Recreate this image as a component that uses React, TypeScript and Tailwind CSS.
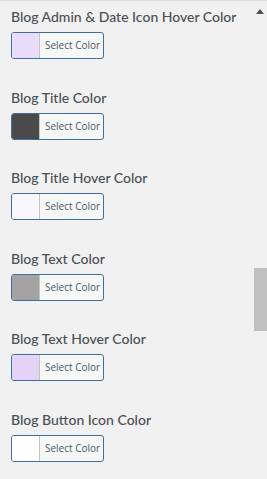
import React from 'react';

const rows = [
  { label: 'Blog Admin & Date Icon Hover Color', swatch: 'bg-[#e8dcf8]' },
  { label: 'Blog Title Color', swatch: 'bg-[#4a4a4a]' },
  { label: 'Blog Title Hover Color', swatch: 'bg-[#f9f6fd]' },
  { label: 'Blog Text Color', swatch: 'bg-[#a3a3a3]' },
  { label: 'Blog Text Hover Color', swatch: 'bg-[#e2d3f7]' },
  { label: 'Blog Button Icon Color', swatch: 'bg-white' },
];

const ColorControl: React.FC<{ label: string; swatch: string }> = ({ label, swatch }) => (
  <div className="flex flex-col">
    <span className="font-['Lato',sans-serif] text-[14px] leading-[20px] font-medium text-[#4a4f55] whitespace-nowrap">{label}</span>
    <button className="mt-[5px] flex h-[27px] w-[93px] overflow-hidden rounded-[3px] border border-[#3f6f9a] bg-[#f6f7f7]">
      <span className={`h-full w-[28px] border-r border-[#c3c4c7] ${swatch}`}></span>
      <span className="flex-1 pl-[5px] text-left text-[10px] leading-[25px] text-[#50575e]">Select Color</span>
    </button>
  </div>
);

export default function App() {
  return (
    <div className="flex h-[479px] w-[267px] overflow-hidden border-t border-[#dcdcde] bg-[#f1f1f1] font-['Open_Sans',sans-serif]">
      <div className="flex flex-1 flex-col gap-[28.5px] pl-[11px] pt-[6px]">
        {rows.map((r) => (
          <ColorControl key={r.label} label={r.label} swatch={r.swatch} />
        ))}
      </div>
      <div className="flex w-[15px] flex-col items-center">
        <svg width="8" height="5" viewBox="0 0 8 5" className="mt-[8px]">
          <path d="M4 0L8 5H0z" fill="#505050" />
        </svg>
        <div className="mt-[254px] ml-[2px] h-[63px] w-[13px] bg-[#c1c1c1]"></div>
      </div>
    </div>
  );
}
